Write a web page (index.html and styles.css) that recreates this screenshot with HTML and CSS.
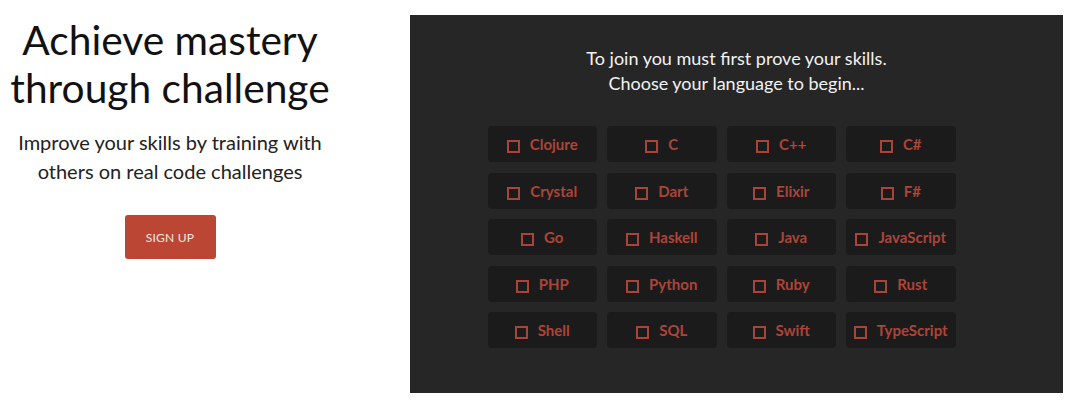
FILE: index.html
```html
<!DOCTYPE html>
<html>
<head>
<meta charset="utf-8">
<link rel="stylesheet" href="styles.css">
</head>
<body>
<div class="page">
  <section class="hero">
    <h1 class="hero-title">Achieve mastery through challenge</h1>
    <p class="hero-sub">Improve your skills by training with others on real code challenges</p>
    <button class="signup">SIGN UP</button>
  </section>
  <section class="panel">
    <p class="panel-intro">To join you must first prove your skills.<br>Choose your language to begin...</p>
    <div class="langs">
      <button class="lang"><span class="box"></span>Clojure</button>
      <button class="lang"><span class="box"></span>C</button>
      <button class="lang"><span class="box"></span>C++</button>
      <button class="lang"><span class="box"></span>C#</button>
      <button class="lang"><span class="box"></span>Crystal</button>
      <button class="lang"><span class="box"></span>Dart</button>
      <button class="lang"><span class="box"></span>Elixir</button>
      <button class="lang"><span class="box"></span>F#</button>
      <button class="lang"><span class="box"></span>Go</button>
      <button class="lang"><span class="box"></span>Haskell</button>
      <button class="lang"><span class="box"></span>Java</button>
      <button class="lang"><span class="box"></span>JavaScript</button>
      <button class="lang"><span class="box"></span>PHP</button>
      <button class="lang"><span class="box"></span>Python</button>
      <button class="lang"><span class="box"></span>Ruby</button>
      <button class="lang"><span class="box"></span>Rust</button>
      <button class="lang"><span class="box"></span>Shell</button>
      <button class="lang"><span class="box"></span>SQL</button>
      <button class="lang"><span class="box"></span>Swift</button>
      <button class="lang"><span class="box"></span>TypeScript</button>
    </div>
  </section>
</div>
</body>
</html>
```
FILE: styles.css
```css
* { box-sizing: border-box; }
html, body { margin: 0; padding: 0; background: #ffffff; }
body { font-family: Lato, "Liberation Sans", sans-serif; color: #111; }
.page { display: flex; align-items: flex-start; }
.hero {
  width: 340px;
  text-align: center;
  padding-top: 16px;
  display: flex;
  flex-direction: column;
  align-items: center;
}
.hero-title {
  margin: 0;
  font-weight: 400;
  font-size: 40.7px;
  line-height: 48px;
  color: #111;
}
.hero-sub {
  margin: 16px 0 0;
  font-size: 20px;
  line-height: 29px;
  color: #222;
  width: 330px;
}
.signup {
  margin-top: 29px;
  width: 91px;
  height: 44px;
  border: 0;
  border-radius: 3px;
  background: #bb4634;
  color: #f6e6e2;
  font-family: Lato, "Liberation Sans", sans-serif;
  font-size: 12px;
  letter-spacing: 0.2px;
}
.panel {
  margin: 15px 0 0 70px;
  width: 653px;
  height: 378px;
  background: #262626;
  display: flex;
  flex-direction: column;
  align-items: center;
  padding-top: 31px;
}
.panel-intro {
  margin: 0;
  text-align: center;
  color: #f2f2f2;
  font-size: 18px;
  line-height: 25px;
}
.langs {
  margin: 30px 30px 0 0;
  display: grid;
  grid-template-columns: repeat(4, 109.5px);
  grid-auto-rows: 36px;
  column-gap: 10px;
  row-gap: 10.5px;
}
.lang {
  background: #1b1b1b;
  border: 0;
  border-radius: 4px;
  color: #ad4438;
  font-family: Lato, "Liberation Sans", sans-serif;
  font-weight: 700;
  font-size: 15px;
  display: flex;
  align-items: center;
  justify-content: center;
  gap: 10px;
  padding: 0;
}
.box {
  width: 13px;
  height: 13px;
  border: 2px solid #a8443a;
  margin-top: 5px;
}
```
